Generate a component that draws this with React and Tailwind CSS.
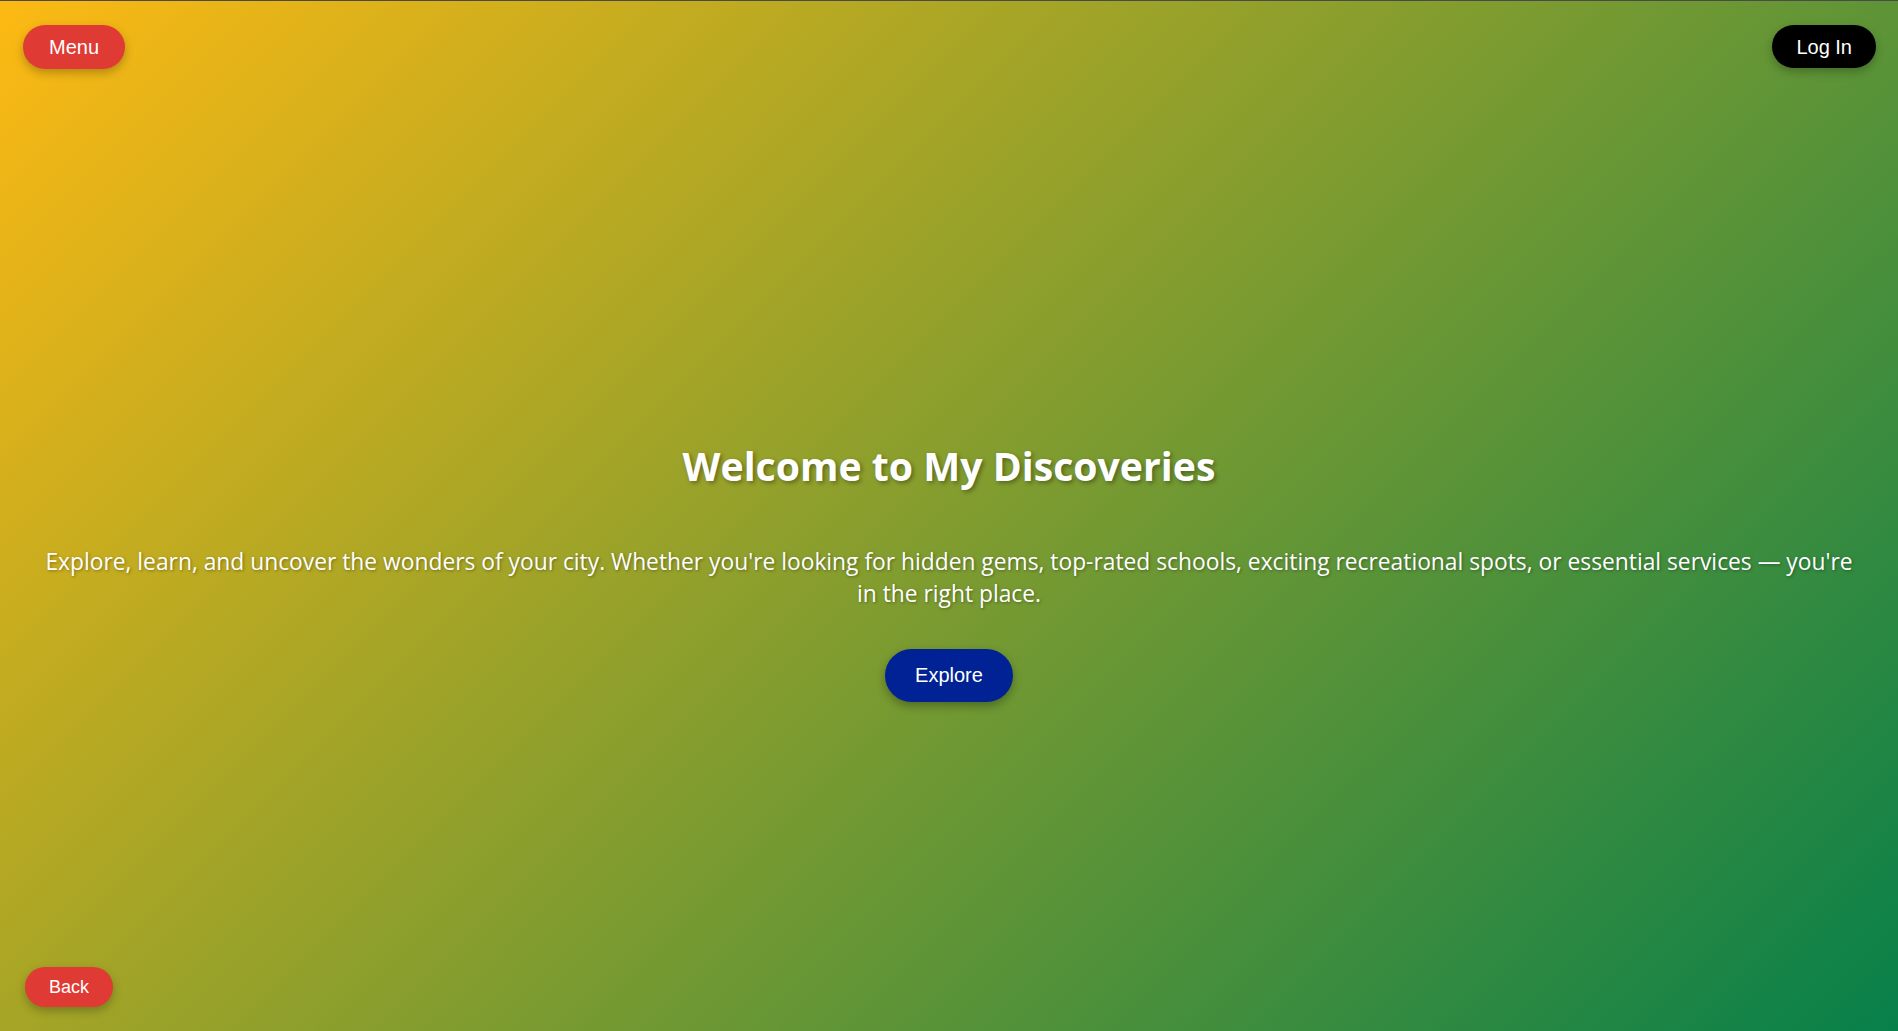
export default function App() {
  return (
    <div className="flex h-screen flex-col border-t border-[#4a4a4a] bg-[linear-gradient(135deg,#fdb913,#07804a)] font-['Liberation_Sans',Arial,sans-serif] text-white">
      {/* Top bar */}
      <header className="flex items-start justify-between pl-[23px] pr-[22px] pt-[24px]">
        <button className="h-[44px] rounded-full bg-[#e03a35] px-[26px] text-[20px] shadow-[0_4px_10px_rgba(0,0,0,0.25)]">
          Menu
        </button>
        <button className="h-[43px] rounded-full bg-black px-[24px] text-[20px] shadow-[0_4px_10px_rgba(0,0,0,0.25)]">
          Log In
        </button>
      </header>

      {/* Hero */}
      <main className="flex flex-1 flex-col items-center justify-center px-[44px] pt-[103px] text-center">
        <h1 className="font-['Open_Sans','Noto_Sans',sans-serif] text-[39.2px] font-bold [text-shadow:2px_2px_4px_rgba(0,0,0,0.35)]">
          Welcome to My Discoveries
        </h1>
        <p className="mt-[50px] font-['Open_Sans','Noto_Sans',sans-serif] text-[22.8px] leading-[32px] [text-shadow:1px_1px_3px_rgba(0,0,0,0.35)]">
          Explore, learn, and uncover the wonders of your city. Whether you're looking for hidden gems, top-rated schools, exciting recreational spots, or essential services — you're in the right place.
        </p>
        <button className="mt-[39px] h-[53px] rounded-full bg-[#002294] px-[30px] text-[20px] shadow-[0_4px_10px_rgba(0,0,0,0.3)]">
          Explore
        </button>
      </main>

      <footer className="pb-[24px] pl-[25px]">
        <button className="h-[40px] rounded-full bg-[#e03a35] px-[24px] text-[18px] shadow-[0_4px_10px_rgba(0,0,0,0.25)]">
          Back
        </button>
      </footer>
    </div>
  );
}
